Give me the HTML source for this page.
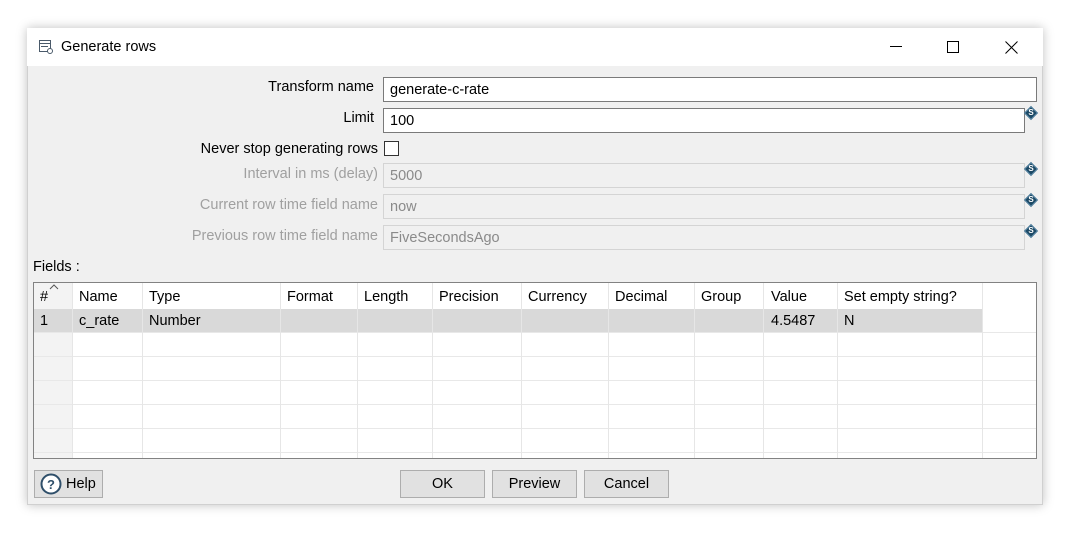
<!DOCTYPE html>
<html><head><style>
*{box-sizing:border-box;margin:0;padding:0}
body{width:1073px;height:546px;background:#fff;font-family:"Liberation Sans",sans-serif;font-size:14.5px;color:#000;position:relative;overflow:hidden}
.a{position:absolute}
.dlg{left:27px;top:28px;width:1016px;height:477px;background:#f0f0f0;box-shadow:0 0 10px rgba(0,0,0,.25);border:1px solid #d0d0d0}
.tb{left:27px;top:28px;width:1016px;height:38px;background:#fff}
.lbl{text-align:right;white-space:nowrap}
.dis{color:#a0a0a0}
.inp{background:#fff;border:1px solid #7a7a7a;padding:4px 0 0 6px;height:25px}
.dinp{background:#f0f0f0;border:1px solid #d4d4d4;color:#8a8a8a;padding:4px 0 0 6px;height:25px}
.dl{width:10px;height:10px;transform:rotate(45deg);background:#1d4a66;border:1px solid #5d8aa8}
.dlt{width:12px;text-align:center;color:#fff;font-size:8px;font-weight:bold;line-height:12px}
.btn{background:#e1e1e1;border:1px solid #adadad;text-align:center;padding-top:5px;height:28px}
.cell{position:absolute;border-right:1px solid #e6e6e6;height:100%;top:0}
</style></head><body>
<div class="a dlg"></div>
<div class="a tb"></div>
<svg class="a" style="left:38px;top:39px" width="16" height="16" viewBox="0 0 16 16"><rect x="1.5" y="1.5" width="11" height="11" fill="none" stroke="#4a5a6a"/><line x1="1.5" y1="4.5" x2="12.5" y2="4.5" stroke="#4a5a6a"/><line x1="3" y1="7.5" x2="10" y2="7.5" stroke="#4a5a6a"/><circle cx="12" cy="12" r="2.5" fill="#fff" stroke="#4a5a6a"/></svg>
<div class="a" style="left:61px;top:39px">Generate rows</div>
<div class="a" style="left:890px;top:46px;width:12px;height:1px;background:#000"></div>
<div class="a" style="left:947px;top:41px;width:12px;height:12px;border:1px solid #000"></div>
<svg class="a" style="left:1005px;top:41px" width="13" height="13"><path d="M0.5 0.5L12.5 12.5M12.5 0.5L0.5 12.5" stroke="#000"/></svg>

<div class="a lbl" style="right:699px;top:79px">Transform name</div>
<div class="a inp" style="left:383px;top:77px;width:654px">generate-c-rate</div>
<div class="a lbl" style="right:699px;top:110px">Limit</div>
<div class="a inp" style="left:383px;top:108px;width:642px">100</div>
<div class="a lbl" style="right:695px;top:141px">Never stop generating rows</div>
<div class="a" style="left:384px;top:141px;width:15px;height:15px;border:1px solid #333;background:#fff"></div>
<div class="a lbl dis" style="right:695px;top:166px">Interval in ms (delay)</div>
<div class="a dinp" style="left:383px;top:163px;width:642px">5000</div>
<div class="a lbl dis" style="right:695px;top:197px">Current row time field name</div>
<div class="a dinp" style="left:383px;top:194px;width:642px">now</div>
<div class="a lbl dis" style="right:695px;top:228px">Previous row time field name</div>
<div class="a dinp" style="left:383px;top:225px;width:642px">FiveSecondsAgo</div>

<div class="a dl" style="left:1026px;top:108px"></div><div class="a dlt" style="left:1025px;top:107px">S</div>
<div class="a dl" style="left:1026px;top:164px"></div><div class="a dlt" style="left:1025px;top:163px">S</div>
<div class="a dl" style="left:1026px;top:195px"></div><div class="a dlt" style="left:1025px;top:194px">S</div>
<div class="a dl" style="left:1026px;top:226px"></div><div class="a dlt" style="left:1025px;top:225px">S</div>

<div class="a" style="left:33px;top:259px">Fields :</div>
<div class="a" style="left:33px;top:282px;width:1004px;height:177px;border:1px solid #828282;background:#fff;overflow:hidden">
  <div class="a" style="left:0;top:0;width:39px;height:177px;background:#f3f3f3"></div>
  <div class="a" style="left:0;top:26px;width:949px;height:23px;background:#d9d9d9"></div>
  <div class="a" style="left:0;top:73px;width:1004px;height:1px;background:#e8e8e8"></div>
  <div class="a" style="left:0;top:97px;width:1004px;height:1px;background:#e8e8e8"></div>
  <div class="a" style="left:0;top:121px;width:1004px;height:1px;background:#e8e8e8"></div>
  <div class="a" style="left:0;top:145px;width:1004px;height:1px;background:#e8e8e8"></div>
  <div class="a" style="left:0;top:169px;width:1004px;height:1px;background:#e8e8e8"></div>
  <div class="a" style="left:0;top:49px;width:1004px;height:1px;background:#e8e8e8"></div>
  <div class="cell" style="left:0;width:39px"></div>
  <div class="cell" style="left:39px;width:70px"></div>
  <div class="cell" style="left:109px;width:138px"></div>
  <div class="cell" style="left:247px;width:77px"></div>
  <div class="cell" style="left:324px;width:75px"></div>
  <div class="cell" style="left:399px;width:89px"></div>
  <div class="cell" style="left:488px;width:87px"></div>
  <div class="cell" style="left:575px;width:86px"></div>
  <div class="cell" style="left:661px;width:69px"></div>
  <div class="cell" style="left:730px;width:74px"></div>
  <div class="cell" style="left:804px;width:145px"></div>
  <svg class="a" style="left:15px;top:0" width="10" height="7"><path d="M1 6L5 2L9 6" fill="none" stroke="#555"/></svg>
  <div class="a" style="left:6px;top:6px">#</div>
  <div class="a" style="left:45px;top:6px">Name</div>
  <div class="a" style="left:115px;top:6px">Type</div>
  <div class="a" style="left:253px;top:6px">Format</div>
  <div class="a" style="left:330px;top:6px">Length</div>
  <div class="a" style="left:405px;top:6px">Precision</div>
  <div class="a" style="left:494px;top:6px">Currency</div>
  <div class="a" style="left:581px;top:6px">Decimal</div>
  <div class="a" style="left:667px;top:6px">Group</div>
  <div class="a" style="left:737px;top:6px">Value</div>
  <div class="a" style="left:810px;top:6px">Set empty string?</div>
  <div class="a" style="left:6px;top:30px">1</div>
  <div class="a" style="left:45px;top:30px">c_rate</div>
  <div class="a" style="left:115px;top:30px">Number</div>
  <div class="a" style="left:737px;top:30px">4.5487</div>
  <div class="a" style="left:810px;top:30px">N</div>
</div>

<div class="a btn" style="left:34px;top:470px;width:69px;text-align:left;padding-left:31px">Help</div>
<svg class="a" style="left:40px;top:473px" width="22" height="22"><circle cx="11" cy="11" r="9.5" fill="#fff" stroke="#2f4f6a" stroke-width="2"/><text x="11" y="16" text-anchor="middle" font-family="Liberation Sans" font-weight="bold" font-size="13" fill="#2f4f6a">?</text></svg>
<div class="a btn" style="left:400px;top:470px;width:85px">OK</div>
<div class="a btn" style="left:492px;top:470px;width:85px">Preview</div>
<div class="a btn" style="left:584px;top:470px;width:85px">Cancel</div>
</body></html>
